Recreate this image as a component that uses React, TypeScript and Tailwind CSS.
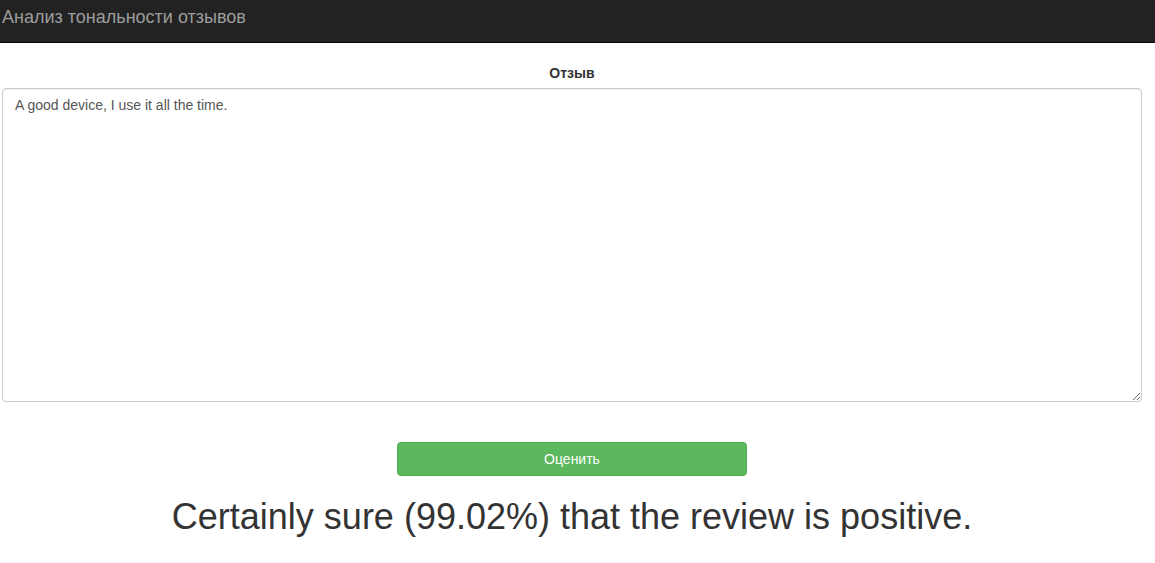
import {useState} from 'react';

export default function App() {
	const [review, setReview] = useState('A good device, I use it all the time.');

	return (
		<div className="min-h-[563px] bg-white text-[14px] text-[#333] font-['Liberation_Sans',Arial,sans-serif]">
			<nav className="h-[43px] bg-[#222] border-b border-[#080808] flex items-center px-[2px]">
				<span className="text-[18px] text-[#9d9d9d] leading-[20px] -mt-[9px]">Анализ тональности отзывов</span>
			</nav>
			<div className="w-[1140px] ml-[2px] pt-[20px]">
				<div className="text-center font-bold leading-[20px] mb-[5px]">Отзыв</div>
				<textarea
					value={review}
					onChange={(e) => setReview(e.target.value)}
					className="block w-full h-[314px] px-[12px] py-[6px] text-[14px] leading-[20px] text-[#555] border border-[#ccc] rounded-[4px] shadow-[inset_0_1px_1px_rgba(0,0,0,0.075)] focus:outline-none"
				/>
				<div className="flex justify-center mt-[40px]">
					<button
						type="button"
						className="w-[350px] h-[34px] bg-[#5cb85c] border border-[#4cae4c] rounded-[4px] text-white text-[14px]"
					>
						Оценить
					</button>
				</div>
				<h2 className="text-center text-[36px] leading-[40px] text-[#333] mt-[21px]">
					Certainly sure (99.02%) that the review is positive.
				</h2>
			</div>
		</div>
	);
}
